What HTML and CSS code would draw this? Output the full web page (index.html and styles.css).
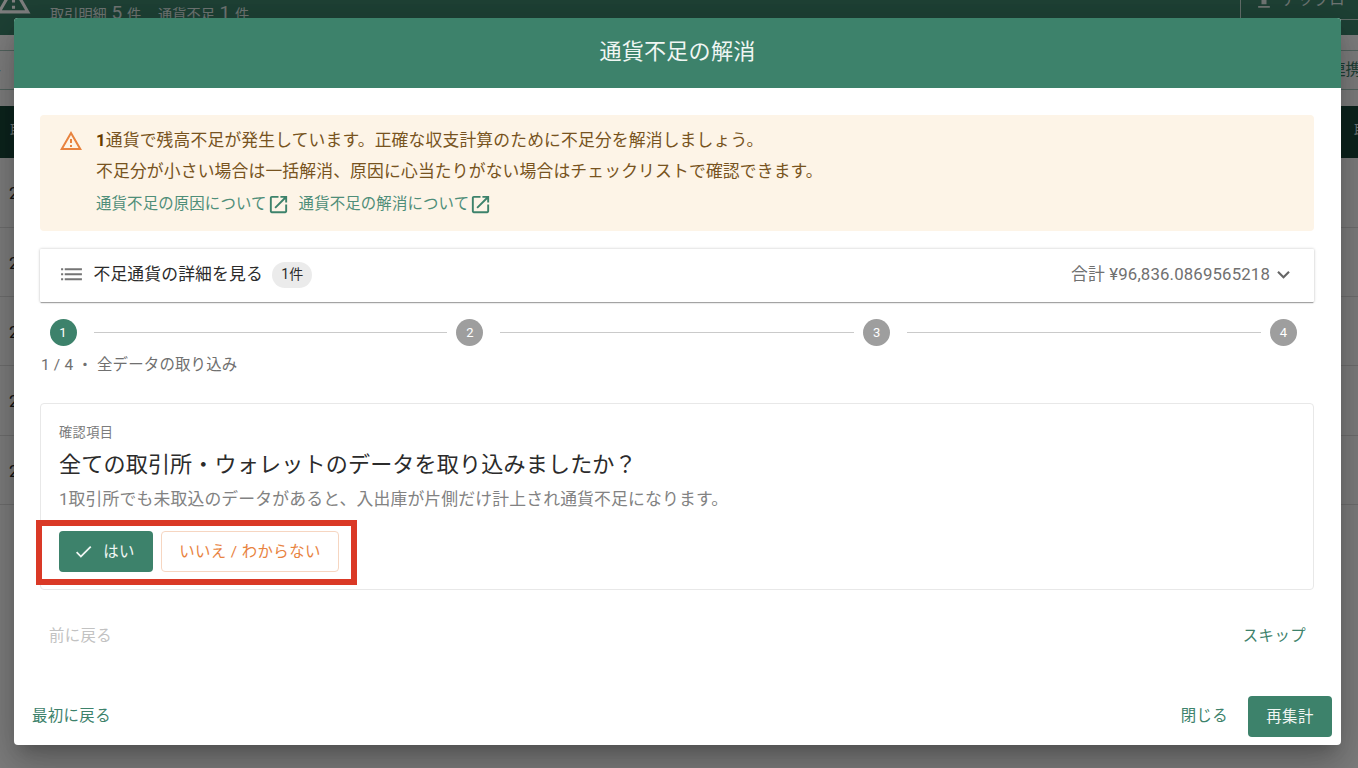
FILE: index.html
```
<!DOCTYPE html>
<html lang="ja">
<head>
<meta charset="utf-8">
<title>通貨不足の解消</title>
<link rel="stylesheet" href="styles.css">
</head>
<body>
<div class="page">
  <header class="summary">
    <svg class="summary-icon" viewBox="0 0 24 24"><path d="M12 5.99 19.53 19H4.47zM12 2 1 21h22zm1 14h-2v2h2zm0-6h-2v4h2z"/></svg>
    <p class="counts"><span>取引明細 <b>5</b> 件</span><span>通貨不足 <b>1</b> 件</span></p>
    <button class="upload"><svg viewBox="0 0 24 24"><path d="M5 20h14v-2H5zM5 10h4v6h6v-6h4l-7-7z"/></svg><span>アップロード</span></button>
  </header>
  <div class="tabs"><span class="dash">-</span><span class="link-tab">連携</span></div>
  <div class="table-head"><span>取</span><span>取</span></div>
  <ul class="rows"><li>2</li><li>2</li><li>2</li><li>2</li><li>2</li></ul>
</div>
<div class="backdrop">
  <section class="dialog">
    <h1 class="dialog-title">通貨不足の解消</h1>
    <div class="content">
      <div class="alert">
        <svg class="alert-icon" viewBox="0 0 24 24"><path d="M12 5.99 19.53 19H4.47zM12 2 1 21h22zm1 14h-2v2h2zm0-6h-2v4h2z"/></svg>
        <div>
          <p><b>1</b>通貨で残高不足が発生しています。正確な収支計算のために不足分を解消しましょう。</p>
          <p>不足分が小さい場合は一括解消、原因に心当たりがない場合はチェックリストで確認できます。</p>
          <nav class="links">
            <a>通貨不足の原因について<svg viewBox="0 0 24 24"><path d="M19 19H5V5h7V3H5c-1.11 0-2 .9-2 2v14c0 1.1.89 2 2 2h14c1.1 0 2-.9 2-2v-7h-2zM14 3v2h3.59l-9.83 9.83 1.41 1.41L19 6.41V10h2V3z"/></svg></a>
            <a>通貨不足の解消について<svg viewBox="0 0 24 24"><path d="M19 19H5V5h7V3H5c-1.11 0-2 .9-2 2v14c0 1.1.89 2 2 2h14c1.1 0 2-.9 2-2v-7h-2zM14 3v2h3.59l-9.83 9.83 1.41 1.41L19 6.41V10h2V3z"/></svg></a>
          </nav>
        </div>
      </div>
      <div class="accordion">
        <svg class="list-icon" viewBox="0 0 24 24"><path d="M2 6h2v2H2zm0 4.8h2v2H2zm0 4.8h2v2H2zM5.5 6H22v2H5.5zm0 4.8H22v2H5.5zm0 4.8H22v2H5.5z"/></svg>
        <span class="accordion-label">不足通貨の詳細を見る</span>
        <span class="chip">1件</span>
        <span class="total">合計 ¥96,836.0869565218</span>
        <svg class="chevron" viewBox="0 0 24 24"><path d="M16.59 8.59 12 13.17 7.41 8.59 6 10l6 6 6-6z"/></svg>
      </div>
      <div class="stepper">
        <span class="step active">1</span><i></i><span class="step">2</span><i></i><span class="step">3</span><i></i><span class="step">4</span>
      </div>
      <p class="step-caption">1 / 4 ・ 全データの取り込み</p>
      <div class="card">
        <p class="overline">確認項目</p>
        <h2>全ての取引所・ウォレットのデータを取り込みましたか？</h2>
        <p class="description">1取引所でも未取込のデータがあると、入出庫が片側だけ計上され通貨不足になります。</p>
        <div class="answers">
          <button class="btn yes"><svg viewBox="0 0 24 24"><path d="M9 16.17 4.83 12l-1.42 1.41L9 19 21 7l-1.41-1.41z"/></svg>はい</button>
          <button class="btn no">いいえ / わからない</button>
          <span class="highlight"></span>
        </div>
      </div>
      <div class="step-nav"><span class="disabled">前に戻る</span><span>スキップ</span></div>
    </div>
    <footer class="actions"><span>最初に戻る</span><span class="close">閉じる</span><button class="btn primary">再集計</button></footer>
  </section>
</div>
</body>
</html>
```
FILE: styles.css
```
* { box-sizing: border-box; margin: 0; padding: 0; }
body { width: 1358px; height: 768px; overflow: hidden; background: #fff; font-family: Roboto, "Noto Sans CJK JP", sans-serif; font-weight: 400; color: #2b2b2b; white-space: nowrap; }
svg { fill: currentColor; flex: none; display: block; }
button { border: 0; font: inherit; color: inherit; }
ul { list-style: none; }

.page { height: 768px; overflow: hidden; background: #fcfcfc; }
.summary { height: 35px; overflow: hidden; display: flex; align-items: flex-start; background: #3d826b; color: #fff; }
.summary-icon { width: 37px; height: 37px; margin: -19px 0 0 -5px; }
.counts { display: flex; gap: 17px; margin-left: 18px; color: #dfeae6; font-size: 14.2px; line-height: 25px; word-spacing: 1.2px; }
.counts b { font-weight: 400; font-size: 19px; }
.upload { display: flex; align-items: center; gap: 8px; margin: -20px -40px 0 auto; width: 158px; height: 40px; padding-left: 13px; border: 1px solid #c5dad3; background: none; color: #dfeae6; font-size: 15.4px; }
.upload svg { width: 20px; height: 20px; margin-top: 2px; }
.upload span { margin-top: -4px; letter-spacing: .4px; }
.tabs { display: flex; justify-content: space-between; height: 40px; margin: 15px 0 16px; border: solid #a5c7bc; border-width: 1px 0; line-height: 39px; font-size: 16px; color: #3d826b; }
.dash { margin-left: -4px; }
.link-tab { margin-right: -3px; font-size: 15.4px; }
.table-head { display: flex; justify-content: space-between; height: 52px; background: #18483a; color: #dfeae6; font-size: 14px; line-height: 48px; padding: 0 0 0 10px; }
.table-head span:last-child { margin-right: -10px; }
.rows li { height: 69.2px; padding-left: 9px; border-bottom: 1px solid #dedede; font-size: 17px; line-height: 70px; }
.rows li:first-child { height: 70px; }

.backdrop { position: absolute; inset: 0; padding: 18px 17px 23px 14px; background: rgba(0,0,0,.5); }
.dialog { display: flex; flex-direction: column; height: 727px; overflow: hidden; border-radius: 4px; background: #fff; box-shadow: 0 11px 15px -7px rgba(0,0,0,.2), 0 24px 38px 3px rgba(0,0,0,.14), 0 9px 46px 8px rgba(0,0,0,.12); }
.dialog-title { height: 70px; background: #3d826b; color: #f0f6f3; font-size: 22.1px; font-weight: 400; letter-spacing: .17px; line-height: 67px; text-align: center; }
.content { flex: 1; padding: 27px 26px 0; }

.alert { display: flex; height: 116px; margin-right: 1px; padding: 10px 19px; border-radius: 4px; background: #fdf4e7; color: #775320; font-size: 16.8px; letter-spacing: .16px; line-height: 31px; }
.alert-icon { width: 24px; height: 24px; margin: 4px 13.5px 0 -.5px; color: #e8833f; }
.alert b { font-weight: 700; color: #663c00; }
.links { display: flex; gap: 9px; height: 35px; align-items: center; color: #4f8e79; font-size: 15.4px; }
.links a { display: flex; align-items: center; }
.links svg { width: 23px; height: 23px; margin: 0 0 1px; color: #3d826b; }

.accordion { display: flex; align-items: center; height: 53px; margin: 18px 1px 0 0; padding: 0 18px 2px 19px; border-radius: 1px; box-shadow: 0 2px 1px -1px rgba(0,0,0,.2), 0 1px 1px rgba(0,0,0,.14), 0 0 3px rgba(0,0,0,.24); font-size: 16.8px; letter-spacing: .15px; }
.list-icon { width: 25px; height: 25px; color: #757575; }
.accordion-label { margin: -3px 0 0 9.5px; }
.chip { height: 26px; margin-left: 9.5px; padding: 0 9px; border-radius: 13px; background: #ebebeb; font-size: 14px; letter-spacing: 0; line-height: 25px; }
.total { margin: -3px 0 0 auto; color: #707070; font-size: 16.8px; }
.chevron { width: 25px; height: 25px; margin-left: 1px; color: #666; }

.stepper { display: flex; align-items: center; height: 27px; margin: 17px 18px 0 9.5px; }
.stepper i { flex: 1; height: 1px; margin: 0 9px 0 17px; background: #cacaca; }
.step { width: 27px; height: 27px; border-radius: 50%; background: #9e9e9e; color: #fff; font-size: 13px; line-height: 27px; text-align: center; }
.active { background: #3d826b; }
.step-caption { margin: 7px 0 0 1px; color: #707070; font-size: 15.45px; letter-spacing: .18px; line-height: 25px; }

.card { height: 187px; margin: 25px 1px 0 0; padding: 18px; border: 1px solid #e8e8e8; border-radius: 4px; }
.overline { color: #7c7c7c; font-size: 13.2px; letter-spacing: .4px; line-height: 22px; }
.card h2 { font-size: 22.1px; font-weight: 400; letter-spacing: .13px; line-height: 38px; margin-top: 1px; }
.description { color: #828282; font-size: 16.82px; letter-spacing: .16px; line-height: 32px; }
.answers { position: relative; display: flex; gap: 8px; margin-top: 16px; }
.btn { display: flex; align-items: center; justify-content: center; height: 41px; padding-bottom: 3px; border-radius: 4px; background: #3d826b; color: #f0f6f3; font-size: 15.4px; letter-spacing: .4px; }
.yes { width: 94px; padding: 0 3px 4px 0; }
.yes svg { width: 21px; height: 21px; margin: 4px 9px 0 -1px; }
.no { width: 178px; padding-bottom: 4px; border: 1px solid #f6d6c1; background: #fff; color: #e8833f; }
.highlight { position: absolute; left: -23px; top: -11px; width: 321px; height: 65px; border: 6px solid #da3926; }
.step-nav { display: flex; justify-content: space-between; margin-top: 34px; padding: 0 9px; color: #3d826b; font-size: 15.4px; letter-spacing: .4px; line-height: 24px; }
.disabled { color: #c2c2c2; }
.actions { display: flex; align-items: center; height: 58px; padding: 0 9px 0 18px; color: #3d826b; font-size: 15.4px; letter-spacing: .4px; }
.actions span { margin-top: -4px; }
.actions .close { margin: -4px 20px 0 auto; }
.primary { width: 84px; }
```
